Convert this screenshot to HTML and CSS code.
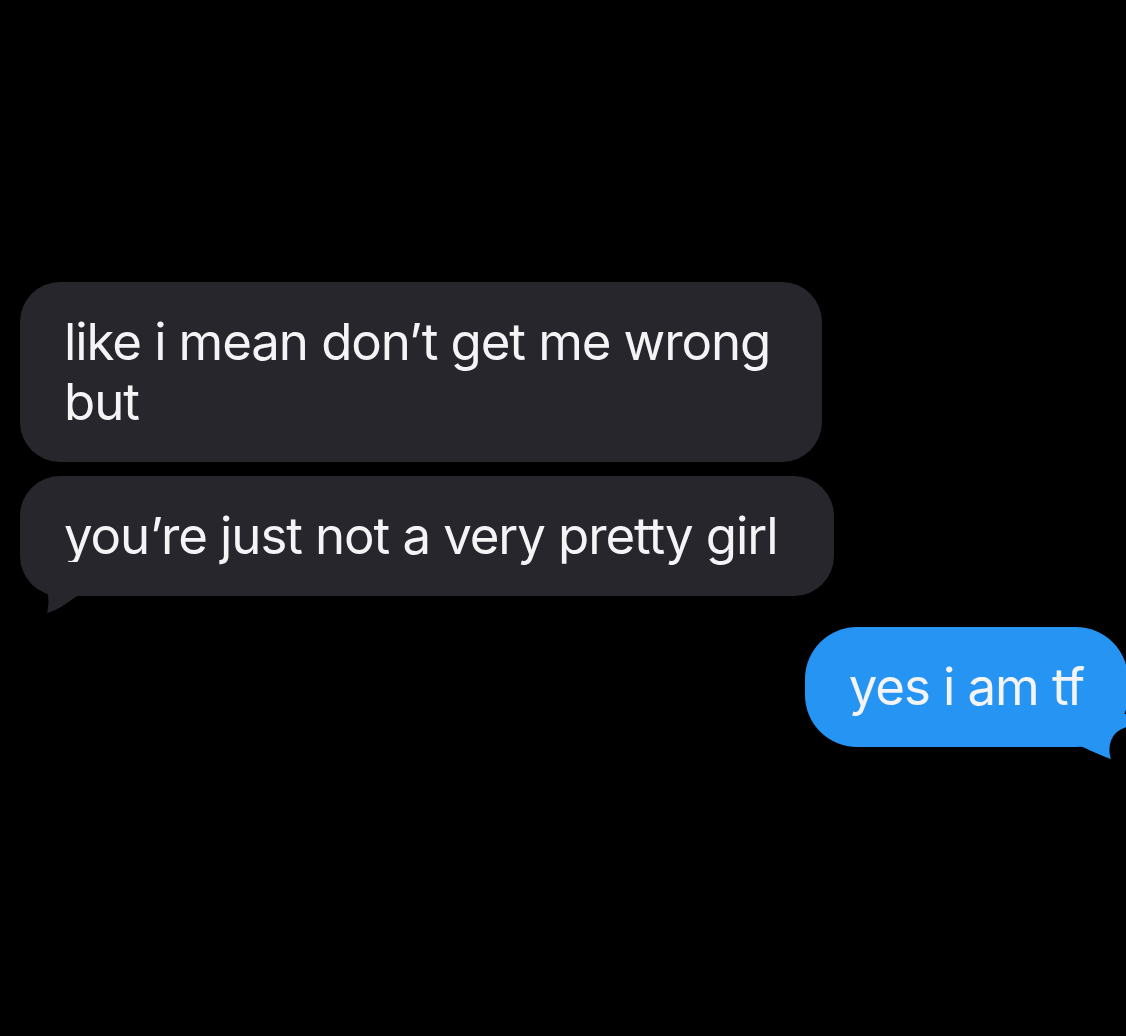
FILE: index.html
```html
<!DOCTYPE html>
<html lang="en">
<head>
<meta charset="utf-8">
<title>Messages</title>
<link rel="stylesheet" href="styles.css">
</head>
<body>
<main class="thread">
  <div class="bubble in in-wide">like i mean don’t get me wrong but</div>
  <div class="bubble in last">you’re just not a very pretty girl
    <svg class="tail tail-in" width="70" height="60" viewBox="0 0 70 60"><path d="M14 6 C24 24 32 40 27 57 C40 54 50 44 62 37 L70 37 L70 6 Z"/></svg>
  </div>
  <div class="bubble out">yes i am tf
    <svg class="tail tail-out" width="70" height="70" viewBox="0 0 70 70"><path d="M8 48 C22 52 35 60 50 65 C47 57 48 45 56 38 C60 35 64 33 70 32 L70 20 L8 20 Z"/></svg>
  </div>
</main>
</body>
</html>
```

FILE: styles.css
```css
html, body {
  margin: 0;
  padding: 0;
  background: #000;
}
body {
  width: 1126px;
  height: 1036px;
  overflow: hidden;
  font-family: "Inter", "Liberation Sans", sans-serif;
}
.thread {
  display: flex;
  flex-direction: column;
  align-items: flex-start;
  padding: 282px 0 0 20px;
}
.bubble {
  position: relative;
  box-sizing: border-box;
  font-size: 51px;
  letter-spacing: -1.1px;
  line-height: 60px;
  color: #f4f4f6;
  font-variant-ligatures: none;
  font-feature-settings: "liga" 0, "calt" 0;
  padding: 30px 57px 30px 44px;
  border-radius: 40px;
}
.in {
  background: #27262c;
}
.in-wide {
  width: 802px;
  padding-right: 30px;
}
.last {
  margin-top: 14px;
}
.out {
  align-self: flex-end;
  margin-top: 31px;
  margin-right: -2px;
  padding: 30px 44px 30px 44px;
  border-radius: 52px;
  background: #2594f3;
}
.tail {
  position: absolute;
}
.tail-in {
  left: 0;
  bottom: -20px;
}
.tail-in path { fill: #27262c; }
.tail-out {
  right: 0;
  bottom: -17px;
  margin-right: -3px;
}
.tail-out path { fill: #2594f3; }
```
